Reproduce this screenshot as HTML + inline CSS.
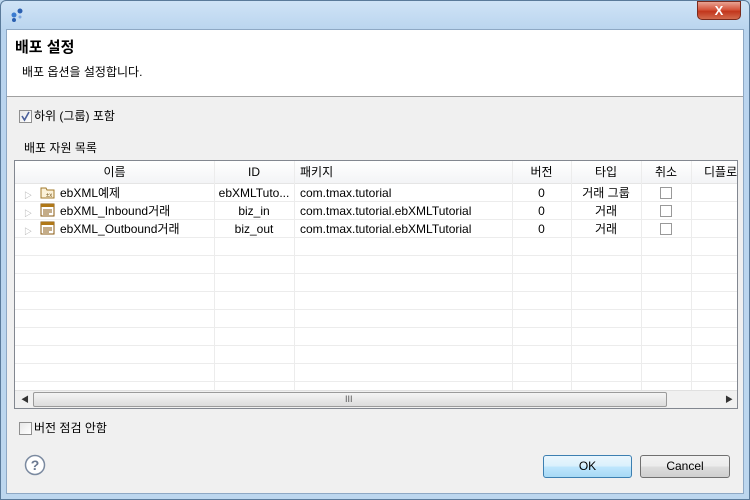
<!DOCTYPE html>
<html><head><meta charset="utf-8">
<style>
*{margin:0;padding:0;box-sizing:border-box}
body{width:750px;height:500px;overflow:hidden;font-family:"Liberation Sans","Noto Sans CJK KR",sans-serif;font-size:12px;line-height:15px;color:#000;background:#bcd6ee;position:relative}
.frame{position:absolute;left:0;top:0;width:750px;height:500px;background:linear-gradient(180deg,#cfe3f6 0,#b9d4ee 30px,#bcd6ee 100%);border:1px solid #5a7a9a;border-radius:6px 6px 0 0}
.close{position:absolute;left:697px;top:1px;width:44px;height:19px;border-radius:0 0 5px 5px;background:linear-gradient(180deg,#e8a393 0,#d5553c 45%,#c2361c 55%,#d26a4d 100%);border:1px solid #7a2a1c;color:#fff;font-weight:bold;font-size:13px;text-align:center;line-height:17px}
.client{position:absolute;left:6px;top:29px;width:738px;height:465px;background:#f0f0f0;border:1px solid #8ea8c4}
.head{position:absolute;left:0;top:0;width:736px;height:67px;background:#fff;border-bottom:1px solid #a0a0a0}
.a{position:absolute;white-space:nowrap;line-height:15px}
.cb{position:absolute;width:13px;height:13px;border:1px solid #8f8f8f;background:linear-gradient(135deg,#e8e8e8,#fff)}
.table{position:absolute;left:14px;top:160px;width:724px;height:249px;border:1px solid #828790;background:#fff;overflow:hidden}
.hdr{position:absolute;left:0;top:0;height:23px;width:722px;background:linear-gradient(#fff,#f3f4f6);border-bottom:1px solid #e5e5e5}
.vl{position:absolute;top:0;width:1px;height:229px;background:#ececec}
.hl{position:absolute;left:0;width:722px;height:1px;background:#ececec}
.c{position:absolute;text-align:center;line-height:15px;white-space:nowrap}
.sb{position:absolute;left:0;top:229px;width:722px;height:18px;background:#f0f0f0;border-top:1px solid #e0e0e0}
.btn{position:absolute;height:23px;border:1px solid #707070;border-radius:3px;text-align:center;line-height:21px;background:linear-gradient(#f2f2f2 0,#ebebeb 50%,#dddddd 51%,#cfcfcf 100%)}
</style></head><body>
<div class="frame"></div>
<div class="a" style="left:10px;top:8px;width:12px;height:12px">
<svg width="14" height="14"><circle cx="10" cy="3" r="2.5" fill="#2a5fb0"/><circle cx="4" cy="7" r="2.5" fill="#3a7bd0"/><circle cx="4" cy="12" r="2" fill="#2a5fb0"/><circle cx="10" cy="9" r="1.5" fill="#7fa8e0"/></svg></div>
<div class="close">X</div>
<div class="client">
 <div class="head">
  <div class="a" style="left:8px;top:9px;font-size:15px;line-height:18px;font-weight:bold">배포 설정</div>
  <div class="a" style="left:15px;top:35px">배포 옵션을 설정합니다.</div>
 </div>
 <div class="cb" style="left:12px;top:80px"><svg width="11" height="11" style="position:absolute;left:0;top:0"><path d="M2 5 L4.5 9 L9 1" stroke="#4a5f9a" stroke-width="1.6" fill="none"/></svg></div>
 <div class="a" style="left:27px;top:79px">하위 (그룹) 포함</div>
 <div class="a" style="left:17px;top:111px">배포 자원 목록</div>
</div>
<div class="table">
 <div class="hdr"></div>
 <div class="vl" style="left:199px"></div><div class="vl" style="left:279px"></div><div class="vl" style="left:497px"></div><div class="vl" style="left:556px"></div><div class="vl" style="left:626px"></div><div class="vl" style="left:676px"></div>
 <div class="hl" style="top:40px"></div><div class="hl" style="top:58px"></div><div class="hl" style="top:76px"></div><div class="hl" style="top:94px"></div><div class="hl" style="top:112px"></div><div class="hl" style="top:130px"></div><div class="hl" style="top:148px"></div><div class="hl" style="top:166px"></div><div class="hl" style="top:184px"></div><div class="hl" style="top:202px"></div><div class="hl" style="top:220px"></div>
 <div class="c" style="left:0;width:199px;top:4px">이름</div>
 <div class="c" style="left:199px;width:80px;top:4px">ID</div>
 <div class="a" style="left:285px;top:4px">패키지</div>
 <div class="c" style="left:497px;width:59px;top:4px">버전</div>
 <div class="c" style="left:556px;width:70px;top:4px">타입</div>
 <div class="c" style="left:626px;width:50px;top:4px">취소</div>
 <div class="a" style="left:689px;top:4px">디플로</div>

 <div class="a" style="left:9px;top:27px;color:#999;font-size:8px">▷</div>
 <div class="a" style="left:9px;top:45px;color:#999;font-size:8px">▷</div>
 <div class="a" style="left:9px;top:63px;color:#999;font-size:8px">▷</div>
 <svg class="a" style="left:25px;top:24px" width="15" height="14"><path d="M1 3h5l1 2h7v8H1z" fill="#fbf1d8" stroke="#a0782a"/><text x="6" y="12" font-size="6" fill="#7a5a20">±x</text></svg>
 <svg class="a" style="left:25px;top:42px" width="15" height="14"><rect x="1" y="1" width="13" height="12" fill="#fff" stroke="#8a5a10"/><rect x="1" y="1" width="13" height="3" fill="#b07818"/><path d="M3 7h9M3 9h9M3 11h6" stroke="#8a5a10"/></svg>
 <svg class="a" style="left:25px;top:60px" width="15" height="14"><rect x="1" y="1" width="13" height="12" fill="#fff" stroke="#8a5a10"/><rect x="1" y="1" width="13" height="3" fill="#b07818"/><path d="M3 7h9M3 9h9M3 11h6" stroke="#8a5a10"/></svg>

 <div class="a" style="left:45px;top:25px">ebXML예제</div>
 <div class="a" style="left:45px;top:43px">ebXML_Inbound거래</div>
 <div class="a" style="left:45px;top:61px">ebXML_Outbound거래</div>
 <div class="c" style="left:199px;width:80px;top:25px">ebXMLTuto...</div>
 <div class="c" style="left:199px;width:80px;top:43px">biz_in</div>
 <div class="c" style="left:199px;width:80px;top:61px">biz_out</div>
 <div class="a" style="left:285px;top:25px">com.tmax.tutorial</div>
 <div class="a" style="left:285px;top:43px">com.tmax.tutorial.ebXMLTutorial</div>
 <div class="a" style="left:285px;top:61px">com.tmax.tutorial.ebXMLTutorial</div>
 <div class="c" style="left:497px;width:59px;top:25px">0</div>
 <div class="c" style="left:497px;width:59px;top:43px">0</div>
 <div class="c" style="left:497px;width:59px;top:61px">0</div>
 <div class="c" style="left:556px;width:70px;top:25px">거래 그룹</div>
 <div class="c" style="left:556px;width:70px;top:43px">거래</div>
 <div class="c" style="left:556px;width:70px;top:61px">거래</div>
 <div class="cb" style="left:645px;top:26px;background:#fff;border-color:#999;width:12px;height:12px"></div>
 <div class="cb" style="left:645px;top:44px;background:#fff;border-color:#999;width:12px;height:12px"></div>
 <div class="cb" style="left:645px;top:62px;background:#fff;border-color:#999;width:12px;height:12px"></div>

 <div class="sb">
  <div class="a" style="left:6px;top:1px;font-size:8px;color:#333">◀</div>
  <div class="a" style="left:18px;top:1px;width:634px;height:15px;border:1px solid #9a9a9a;border-radius:2px;background:linear-gradient(#f4f4f4,#dcdcdc)"></div>
  <div class="a" style="left:330px;top:1px;font-size:9px;color:#555">III</div>
  <div class="a" style="left:710px;top:1px;font-size:8px;color:#333">▶</div>
 </div>
</div>
<div class="cb" style="left:19px;top:422px"></div>
<div class="a" style="left:34px;top:421px">버전 점검 안함</div>
<svg class="a" style="left:24px;top:454px" width="22" height="22"><circle cx="11" cy="11" r="9.5" fill="#fff" stroke="#7b8aa0" stroke-width="1.5"/><text x="11" y="16" font-size="14" text-anchor="middle" fill="#6a7890" font-family="Liberation Sans" font-weight="bold">?</text></svg>
<div class="btn" style="left:543px;top:455px;width:89px;border-color:#3c7fb1;background:linear-gradient(#eaf6fd 0,#d9f0fc 50%,#bee6fd 51%,#a7d9f5 100%)">OK</div>
<div class="btn" style="left:640px;top:455px;width:90px">Cancel</div>
</body></html>
